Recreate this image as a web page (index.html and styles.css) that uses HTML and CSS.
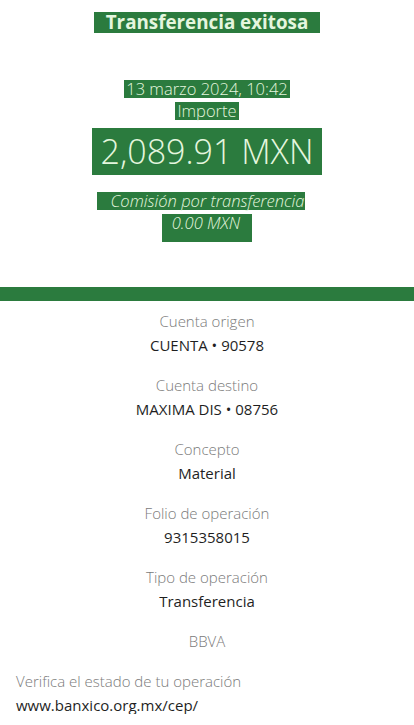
FILE: index.html
```html
<!DOCTYPE html>
<html>
  <head>
    <meta name="viewport" content="width=device-width, initial-scale=1.0" />
    <link rel="stylesheet" href="styles.css">
  </head>

  <body>
    <div class="header">
      <div class="line title-line"><span class="tag title">Transferencia exitosa</span></div>
      <div class="line date-line"><span class="tag">13 marzo 2024, 10:42</span></div>
      <div class="line"><span class="tag">Importe</span></div>
      <div class="line amount-line"><span class="tag amount">2,089.91 MXN</span></div>
      <div class="line fee-line"><span class="tag fee">Comisión por transferencia</span></div>
      <div class="line"><span class="tag fee fee-value">0.00 MXN</span></div>
    </div>

    <div class="bar"></div>

    <div class="details">
      <div class="item">
        <div class="label">Cuenta origen</div>
        <div class="value">CUENTA • 90578</div>
      </div>
      <div class="item">
        <div class="label">Cuenta destino</div>
        <div class="value">MAXIMA DIS • 08756</div>
      </div>
      <div class="item">
        <div class="label">Concepto</div>
        <div class="value">Material</div>
      </div>
      <div class="item">
        <div class="label">Folio de operación</div>
        <div class="value">9315358015</div>
      </div>
      <div class="item">
        <div class="label">Tipo de operación</div>
        <div class="value">Transferencia</div>
      </div>
      <div class="label bank">BBVA</div>
    </div>

    <div class="verify">
      <div class="label">Verifica el estado de tu operación</div>
      <div class="value">www.banxico.org.mx/cep/</div>
    </div>
  </body>
</html>
```

FILE: styles.css
```css
body {
  margin: 0;
  background: #fff;
  font-family: 'Open Sans', 'Liberation Sans', sans-serif;
  color: #222;
}

.header {
  text-align: center;
  padding-top: 12px;
  height: 287px;
  box-sizing: border-box;
}

.line {
  line-height: 18px;
  margin-top: 4px;
}

.tag {
  display: inline-block;
  background: #2b7b3e;
  color: #e4f6de;
  font-size: 16.5px;
  font-weight: 300;
  padding: 0 2px;
}

.title-line {
  margin-top: 0;
}

.tag.title {
  font-size: 18.8px;
  font-weight: 700;
  line-height: 21px;
  padding: 0 12px;
}

.date-line {
  margin-top: 47px;
}

.amount-line {
  margin-top: 8px;
}

.tag.amount {
  font-size: 34px;
  line-height: 47px;
  padding: 0 9px;
}

.fee-line {
  margin-top: 17px;
}

.tag.fee {
  font-style: italic;
  padding: 0 1px 0 14px;
  margin-right: 12px;
}

.tag.fee-value {
  padding: 0 12px 10px 10px;
  margin-right: 0;
}

.bar {
  height: 14px;
  background: #2b7b3e;
}

.details {
  text-align: center;
  padding-top: 11px;
}

.item {
  margin-bottom: 22px;
}

.label {
  font-size: 15px;
  line-height: 18px;
  color: #7a7a7a;
  font-weight: 300;
}

.value {
  font-size: 15px;
  line-height: 18px;
  margin-top: 6px;
  color: #1f1f1f;
}

.bank {
  margin-top: 0;
}

.verify {
  padding: 22px 16px 0;
}
```
